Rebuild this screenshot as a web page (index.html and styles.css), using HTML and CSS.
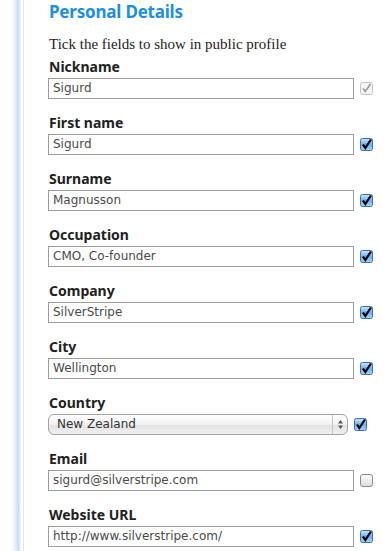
FILE: index.html
```html
<!DOCTYPE html>
<html>
<head>
<meta charset="utf-8">
<link rel="stylesheet" href="styles.css">
</head>
<body>
<div class="page">
  <div class="rail"></div>
  <form class="content">
    <h2 class="title">Personal Details</h2>
    <p class="hint">Tick the fields to show in public profile</p>

    <div class="field">
      <label class="label">Nickname</label>
      <div class="row">
        <div class="input">Sigurd</div>
        <span class="check disabled"><svg viewBox="0 0 13 13" width="13" height="13"><rect x="0.5" y="0.5" width="12" height="12" rx="2" fill="#f4f4f4" stroke="#c4c4c4"/><path d="M3 6.5 L5.2 9.5 L10.5 2" fill="none" stroke="#9a9a9a" stroke-width="1.6"/></svg></span>
      </div>
    </div>

    <div class="field">
      <label class="label">First name</label>
      <div class="row">
        <div class="input">Sigurd</div>
        <span class="check"><svg viewBox="0 0 13 13" width="13" height="13"><defs><linearGradient id="g1" x1="0" y1="0" x2="0" y2="1"><stop offset="0" stop-color="#cfe6fb"/><stop offset="0.5" stop-color="#6fb0ee"/><stop offset="1" stop-color="#a9d4fb"/></linearGradient></defs><rect x="0.5" y="0.5" width="12" height="12" rx="2" fill="url(#g1)" stroke="#3a6fa8"/><path d="M3 6.5 L5.3 10 L11 1.5" fill="none" stroke="#000" stroke-width="2.2"/></svg></span>
      </div>
    </div>

    <div class="field">
      <label class="label">Surname</label>
      <div class="row">
        <div class="input">Magnusson</div>
        <span class="check"><svg viewBox="0 0 13 13" width="13" height="13"><rect x="0.5" y="0.5" width="12" height="12" rx="2" fill="url(#g1)" stroke="#3a6fa8"/><path d="M3 6.5 L5.3 10 L11 1.5" fill="none" stroke="#000" stroke-width="2.2"/></svg></span>
      </div>
    </div>

    <div class="field">
      <label class="label">Occupation</label>
      <div class="row">
        <div class="input">CMO, Co-founder</div>
        <span class="check"><svg viewBox="0 0 13 13" width="13" height="13"><rect x="0.5" y="0.5" width="12" height="12" rx="2" fill="url(#g1)" stroke="#3a6fa8"/><path d="M3 6.5 L5.3 10 L11 1.5" fill="none" stroke="#000" stroke-width="2.2"/></svg></span>
      </div>
    </div>

    <div class="field">
      <label class="label">Company</label>
      <div class="row">
        <div class="input">SilverStripe</div>
        <span class="check"><svg viewBox="0 0 13 13" width="13" height="13"><rect x="0.5" y="0.5" width="12" height="12" rx="2" fill="url(#g1)" stroke="#3a6fa8"/><path d="M3 6.5 L5.3 10 L11 1.5" fill="none" stroke="#000" stroke-width="2.2"/></svg></span>
      </div>
    </div>

    <div class="field">
      <label class="label">City</label>
      <div class="row">
        <div class="input">Wellington</div>
        <span class="check"><svg viewBox="0 0 13 13" width="13" height="13"><rect x="0.5" y="0.5" width="12" height="12" rx="2" fill="url(#g1)" stroke="#3a6fa8"/><path d="M3 6.5 L5.3 10 L11 1.5" fill="none" stroke="#000" stroke-width="2.2"/></svg></span>
      </div>
    </div>

    <div class="field">
      <label class="label">Country</label>
      <div class="row">
        <div class="select">
          <span class="select-text">New Zealand</span>
          <span class="select-arrows"><svg viewBox="0 0 7 11" width="7" height="11"><path d="M3.5 1 L6 4.5 L1 4.5 Z M3.5 10 L6 6.5 L1 6.5 Z" fill="#555"/></svg></span>
        </div>
        <span class="check"><svg viewBox="0 0 13 13" width="13" height="13"><rect x="0.5" y="0.5" width="12" height="12" rx="2" fill="url(#g1)" stroke="#3a6fa8"/><path d="M3 6.5 L5.3 10 L11 1.5" fill="none" stroke="#000" stroke-width="2.2"/></svg></span>
      </div>
    </div>

    <div class="field">
      <label class="label">Email</label>
      <div class="row">
        <div class="input">sigurd@silverstripe.com</div>
        <span class="check"><svg viewBox="0 0 13 13" width="13" height="13"><defs><linearGradient id="g2" x1="0" y1="0" x2="0" y2="1"><stop offset="0" stop-color="#ffffff"/><stop offset="1" stop-color="#dcdcdc"/></linearGradient></defs><rect x="0.5" y="0.5" width="12" height="12" rx="2.5" fill="url(#g2)" stroke="#8a8a8a"/></svg></span>
      </div>
    </div>

    <div class="field">
      <label class="label">Website URL</label>
      <div class="row">
        <div class="input">http://www.silverstripe.com/</div>
        <span class="check"><svg viewBox="0 0 13 13" width="13" height="13"><rect x="0.5" y="0.5" width="12" height="12" rx="2" fill="url(#g1)" stroke="#3a6fa8"/><path d="M3 6.5 L5.3 10 L11 1.5" fill="none" stroke="#000" stroke-width="2.2"/></svg></span>
      </div>
    </div>
  </form>
</div>
</body>
</html>
```

FILE: styles.css
```css
html, body {
  margin: 0;
  padding: 0;
  background: #fff;
}
.page {
  display: flex;
  min-height: 551px;
}
.rail {
  width: 24px;
  flex: none;
  background: linear-gradient(to right, #fff 0, #fff 13px, #eef4fb 14px, #c9dcf1 19px, #e9f1fa 20px, #fff 21px, #fff 23px, #e4e4e4 23px, #e4e4e4 24px);
}
.content {
  padding-left: 24px;
  width: 326px;
  font-family: "DejaVu Sans", Verdana, sans-serif;
}
.title {
  margin: 0;
  padding: 2px 0 0 1px;
  font-family: "Noto Sans", "DejaVu Sans", sans-serif;
  font-size: 17px;
  line-height: 20px;
  font-weight: bold;
  letter-spacing: -0.2px;
  color: #1b8fe8;
}
.hint {
  margin: 14px 0 6px 1px;
  font-family: "Liberation Serif", "Times New Roman", serif;
  font-size: 15px;
  line-height: 16px;
  color: #222;
}
.field {
  margin-bottom: 15px;
}
.label {
  display: block;
  font-family: "Noto Sans", "DejaVu Sans", sans-serif;
  font-size: 14px;
  line-height: 17px;
  font-weight: bold;
  color: #222;
  margin-bottom: 3px;
  padding-left: 1px;
}
.row {
  display: flex;
  align-items: center;
  gap: 6px;
}
.input {
  width: 306px;
  height: 21px;
  box-sizing: border-box;
  border: 1px solid #9c9c9c;
  padding: 0 4px;
  font-size: 12px;
  line-height: 19px;
  color: #4a4a4a;
  background: #fff;
  white-space: nowrap;
  overflow: hidden;
}
.check {
  display: flex;
  width: 13px;
  height: 13px;
}
.select {
  width: 300px;
  height: 21px;
  box-sizing: border-box;
  border: 1px solid #a4a4a4;
  border-radius: 6px;
  background: linear-gradient(to bottom, #ffffff 0%, #f1f1f1 50%, #e2e2e2 51%, #f0f0f0 100%);
  display: flex;
  align-items: center;
  font-size: 12px;
  color: #333;
}
.select-text {
  flex: 1;
  padding-left: 8px;
  line-height: 19px;
}
.select-arrows {
  width: 14px;
  height: 19px;
  border-left: 1px solid #c4c4c4;
  display: flex;
  align-items: center;
  justify-content: center;
}
```
